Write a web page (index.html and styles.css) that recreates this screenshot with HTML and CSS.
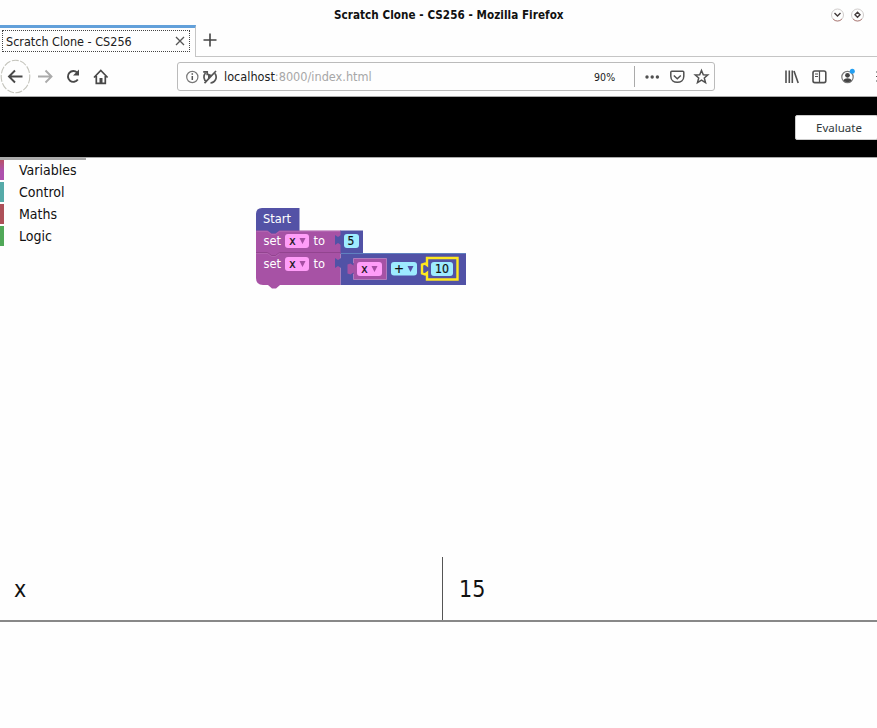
FILE: index.html
```html
<!DOCTYPE html>
<html lang="en">
<head>
<meta charset="utf-8">
<title>Scratch Clone - CS256</title>
<link rel="stylesheet" href="styles.css">
</head>
<body>
<header class="titlebar">
  <span class="window-title">Scratch Clone - CS256 - Mozilla Firefox</span>
  <svg class="window-buttons" width="36" height="18" viewBox="0 0 36 18" fill="none">
    <g stroke="#d0cccb"><circle cx="8.500" cy="9" r="6"/><circle cx="28.500" cy="9" r="6"/></g>
    <g stroke="#b98884"><path d="M4 13a6 6 0 0 0 9 0M24 13a6 6 0 0 0 9 0"/></g>
    <g stroke="#443c3c" stroke-width="1.400"><path d="M5.500 7l3 3 3-3"/><path d="M28.500 6.200l2.500 2.500-2.500 2.500-2.500-2.500z"/></g>
  </svg>
</header>
<div class="tabs">
  <div class="tab">
    <div class="tab-inner">
      <span class="tab-title">Scratch Clone - CS256</span>
      <svg width="10" height="10" viewBox="0 0 10 10" stroke="#555" stroke-width="1.300"><path d="M1 1l8 8M9 1l-8 8"/></svg>
    </div>
  </div>
  <div class="tab-rest">
    <svg width="14" height="14" viewBox="0 0 14 14" stroke="#444" stroke-width="1.600"><path d="M7 .5v13M.5 7h13"/></svg>
  </div>
</div>
<nav class="navbar">
  <svg class="nav-icons" width="120" height="38" viewBox="0 58 120 38" fill="none" stroke="#484848" stroke-width="1.900">
    <ellipse cx="15.500" cy="76.500" rx="14.300" ry="16.300" stroke="#c4c4bc" stroke-width="1.100" stroke-dasharray="7 1.500"/>
    <path d="M22.500 76.500H9M15 70.500l-6 6 6 6"/>
    <path d="M38 76.500h13M45.500 70.500l6 6-6 6" stroke="#aaa"/>
    <path d="M77.800 79.500a5.400 5.400 0 1 1-.6-6.800"/><path d="M79 69.500v6h-6z" fill="#484848" stroke="none"/>
    <path d="M94 77.500l6.800-7 6.800 7M96.300 76v7.300h9V76" stroke-width="1.700"/><path d="M99.500 78h3v5h-3z" fill="#484848" stroke="none"/>
  </svg>
  <div class="urlbar">
    <svg class="site-icons" width="34" height="18" viewBox="184 68 34 18" fill="none">
      <circle cx="192.300" cy="77" r="5.600" stroke="#777" stroke-width="1.200"/>
      <path d="M192.300 76v4M192.300 73.300v1.500" stroke="#555" stroke-width="1.500"/>
      <g stroke="#555" stroke-width="1.700"><path d="M205.500 73a6 6 0 0 0 1.200 9M215 73.500a6 6 0 0 1-4.500 9.500M203.200 71.800h4v3.500M204.500 83.200L216 71"/></g>
      <path d="M208 73.500l4 1.500-4 4z" fill="#555"/>
    </svg>
    <span class="url"><b>localhost</b>:8000/index.html</span>
    <span class="zoom">90%</span>
    <svg class="page-icons" width="84" height="22" viewBox="630 66 84 22" fill="none" stroke="#505050" stroke-width="1.500">
      <path d="M634.500 66v21" stroke="#aaa" stroke-width="1"/>
      <g fill="#505050" stroke="none"><circle cx="647" cy="77" r="1.700"/><circle cx="652.200" cy="77" r="1.700"/><circle cx="657.400" cy="77" r="1.700"/></g>
      <path d="M671.800 71.300h11a1 1 0 0 1 1 1v4c0 8-13 8-13 0v-4a1 1 0 0 1 1-1z"/><path d="M673.800 75.500l3.500 3.200 3.500-3.200"/>
      <path d="M701.500 70.500l1.800 4.200 4.500.3-3.500 3 1.200 4.600-4-2.500-4 2.500 1.200-4.600-3.500-3 4.500-.3z"/>
    </svg>
  </div>
  <svg class="tool-icons" width="97" height="22" viewBox="780 66 97 22" fill="none" stroke="#505050" stroke-width="1.600">
    <path d="M786 70.500V83M789.300 70.500V83M792.300 70.500V83M794 71l4.200 12"/>
    <rect x="813" y="71" width="12.800" height="11.600" rx="1.800"/><path d="M819.500 71v11.500" stroke-width="1.200"/><path d="M815 74h3M815 76.500h3" stroke-width="1"/>
    <circle cx="847.500" cy="77" r="5.700" stroke="#777" stroke-width="1.200"/><circle cx="847.500" cy="75.300" r="2.400" fill="#444" stroke="none"/><path d="M843.500 80.500c1-3 7-3 8 0-2 2-6 2-8 0z" fill="#444" stroke="none"/>
    <circle cx="852.300" cy="71.300" r="2.500" fill="#239ff2" stroke="none"/>
    <path d="M876 72h1M876 76.500h1M876 81h1" stroke-width="1.200"/>
  </svg>
</nav>
<div class="banner"><button class="evaluate">Evaluate</button></div>
<main class="editor">
  <ul class="toolbox">
    <li class="variables">Variables</li>
    <li class="control">Control</li>
    <li class="maths">Maths</li>
    <li class="logic">Logic</li>
  </ul>
  <svg class="workspace" width="791" height="399" viewBox="86 158 791 399">
    <path d="M256 235v-21q0-6 6-6h37.500v24H280v3z" fill="#5352a6"/>
    <path d="M340 230.500h23V254h-23z" fill="#5152a6"/>
    <path d="M340.500 253H466v32H340.500z" fill="#5152a6"/>
    <path d="M340.500 253.500H466" stroke="#6080bf" fill="none"/>
    <path d="M256 230.500h11.500l4 3h4l4-3H340.500V285H280l-4 3.500h-4l-4-3.500h-5q-7 0-7-7z" fill="#a752a5"/>
    <path d="M256 252.500h11.500l4 3h4l4-3H340.500" fill="none" stroke="#92448f"/>
    <path d="M256 253.500h11.500l4 3h4l4-3M256.500 231.500h11l4 3h4l4-3H340" fill="none" stroke="#b66bb3" stroke-width=".7"/>
    <path d="M341 235l-3 2-3-2v10l3-2 3 2zM341 258l-3 2-3-2v10l3-2 3 2z" fill="#5152a6"/>
    <path d="M353.500 258.500h33v21h-33v-7l-3 2-3-1v-9l3-1 3 2z" fill="#a552a5"/>
    <path d="M353.500 263v-4.500h33M353.500 274v5.500h33v-21" fill="none" stroke="#bd86c1" stroke-width=".8"/>
    <g fill="#ff9df8"><rect x="285" y="234" width="24" height="14" rx="3"/><rect x="285" y="257" width="24" height="14" rx="3"/><rect x="357" y="262" width="25" height="14" rx="3"/></g>
    <g fill="#9eebff"><rect x="344" y="234" width="15" height="14" rx="3"/><rect x="391" y="262" width="26" height="13.500" rx="3"/><rect x="431" y="262" width="22" height="14" rx="3"/></g>
    <path d="M427 258h30.500v21.500H427V273l-2 1.500-3-1v-9l3-1 2 1.500z" fill="none" stroke="#ffe81f" stroke-width="2.400"/>
    <path d="M299.500 238h6l-3 6zM299.500 261h6l-3 6zM371.500 266h6l-3 6z" fill="#a64ea3"/>
    <path d="M407.500 266h6l-3 6z" fill="#5352a6"/>
    <g class="block-text">
      <text x="263" y="223.300" textLength="28" lengthAdjust="spacingAndGlyphs">Start</text>
      <text x="263.500" y="245" textLength="17.500" lengthAdjust="spacingAndGlyphs">set</text>
      <text x="313.500" y="245" textLength="11.500" lengthAdjust="spacingAndGlyphs">to</text>
      <text x="263.500" y="267.500" textLength="17.500" lengthAdjust="spacingAndGlyphs">set</text>
      <text x="313.500" y="267.500" textLength="11.500" lengthAdjust="spacingAndGlyphs">to</text>
    </g>
    <g class="field-text">
      <text x="289.300" y="245">x</text><text x="289.300" y="267.500">x</text><text x="361.300" y="273">x</text>
      <text x="347.500" y="245">5</text><text x="394" y="273" textLength="10" lengthAdjust="spacingAndGlyphs">+</text><text x="435" y="273" textLength="14" lengthAdjust="spacingAndGlyphs">10</text>
    </g>
  </svg>
</main>
<div class="results"><div class="name">x</div><div class="value">15</div></div>
</body>
</html>
```
FILE: styles.css
```css
* { box-sizing: border-box; }
body {
  margin: 0;
  width: 877px;
  height: 728px;
  overflow: hidden;
  background: #fefefe;
  color: #202020;
  font-family: "DejaVu Sans Condensed", "DejaVu Sans", sans-serif;
  font-stretch: condensed;
}
svg { display: block; flex: none; }
span { white-space: nowrap; }
.titlebar { display: flex; height: 25px; align-items: center; padding-top: 5px; }
.window-title { margin-left: 334px; width: 495px; font-size: 11.6px; letter-spacing: .05px; font-weight: bold; color: #111; }
.tabs { display: flex; height: 32px; }
.tab { width: 196px; border-top: 3px solid #62a0da; border-right: 1px solid #c5c5c5; padding: 2px 0 0 2px; }
.tab-inner { display: flex; align-items: center; justify-content: space-between; width: 188px; height: 22px; border: 1px dotted #444; padding: 0 4px 0 3px; font-size: 12.5px; }
.tab-rest { flex: 1; border-bottom: 1px solid #c5c5c5; padding: 8px 0 0 7px; }
.navbar { display: flex; align-items: center; height: 40px; border-bottom: 1px solid #aaa; }
.urlbar { display: flex; align-items: center; width: 538px; height: 29px; margin-left: 57px; border: 1px solid #bbb; border-radius: 3px; }
.site-icons { margin-left: 6px; }
.url { width: 376px; padding-left: 6px; font-size: 12.6px; color: #a7a7a7; }
.url b { font-weight: normal; color: #222; }
.zoom { width: 36px; font-size: 10.5px; letter-spacing: .1px; }
.tool-icons { margin-left: auto; }
.banner { display: flex; align-items: center; justify-content: flex-end; height: 60px; background: #000; }
.evaluate { width: 83px; height: 25px; margin: 0 -1px 0 0; padding: 0 0 0 5px; border: 1px solid #ccc; border-radius: 2px; background: #fff; color: #30383a; font: 11.5px "Noto Sans", sans-serif; }
.editor { display: flex; height: 400px; border-top: 1px solid #aaa; }
.toolbox { width: 86px; height: 92px; margin: 0; padding: 0; list-style: none; border-top: 2px solid #aaa; font-size: 14px; color: #111; }
.toolbox li { height: 20px; margin-bottom: 2px; padding-left: 15px; border-left: 4px solid; line-height: 20px; }
.toolbox .variables { border-image: linear-gradient(#b85060, #ad50ad 55%) 1; }
.toolbox .control { border-color: #55aaa8; }
.toolbox .maths { border-color: #ad5058; }
.toolbox .logic { border-color: #50a858; }
.block-text { font-size: 12px; fill: #fff; }
.field-text { font-size: 12px; fill: #111; stroke: #111; stroke-width: .2px; }
.results { display: flex; height: 65px; border-bottom: 2px solid #888; font-size: 23px; line-height: 65px; color: #111; }
.name { width: 443px; padding-left: 14px; border-right: 1px solid #555; }
.value { padding-left: 16px; }
```
